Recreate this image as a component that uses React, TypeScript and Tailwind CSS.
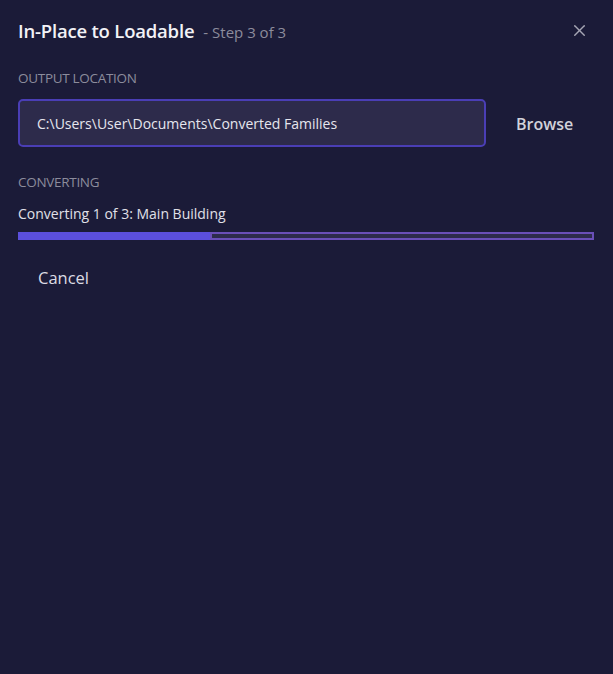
import { X } from "lucide-react";

const App = () => {
  return (
    <div
      className="min-h-[674px] w-full bg-[#1b1b38] text-white"
      style={{ fontFamily: '"Open Sans", "Noto Sans", sans-serif' }}
    >
      <div className="px-[18px] pt-[17px]">
        <div className="flex items-center justify-between">
          <div className="flex items-baseline">
            <h1 className="text-[18.5px] font-semibold tracking-[-0.2px] text-[#f2f2f6]">
              In-Place to Loadable
            </h1>
            <span className="ml-[9px] text-[15px] text-[#8c8c9c]">- Step 3 of 3</span>
          </div>
          <button className="mr-[6px] text-[#a6a6b4]">
            <X size={19} strokeWidth={1.75} />
          </button>
        </div>

        <div className="mt-[23px] text-[13.5px] uppercase tracking-[-0.3px] text-[#8c8c9c]">
          Output Location
        </div>
        <div className="mt-[11px] flex items-center">
          <div className="flex h-[48px] w-[468px] items-center rounded-[5px] border-2 border-[#4a3eb5] bg-[#2d2b4b] px-[17px] pt-[1px] text-[14px] text-[#e6e6ee]">
            C:\Users\User\Documents\Converted Families
          </div>
          <button className="ml-[30px] pt-[1px] text-[16px] font-semibold text-[#d2d2da]">Browse</button>
        </div>

        <div className="mt-[25px] text-[13.5px] uppercase tracking-[-0.3px] text-[#8c8c9c]">
          Converting
        </div>
        <div className="mt-[11px] text-[14px] text-[#e0e0e8]">
          Converting 1 of 3: Main Building
        </div>
        <div className="mt-[8px] flex h-[8px] w-[576px]">
          <div className="h-full w-[192px] bg-[#5b4fdc]" />
          <div className="h-full flex-1 border-2 border-[#6a4fb8] bg-[#2d2b4b]" />
        </div>

        <button className="mt-[26px] ml-[20px] text-[16.5px] font-medium text-[#dcdce4]">Cancel</button>
      </div>
    </div>
  );
};

export default App;
